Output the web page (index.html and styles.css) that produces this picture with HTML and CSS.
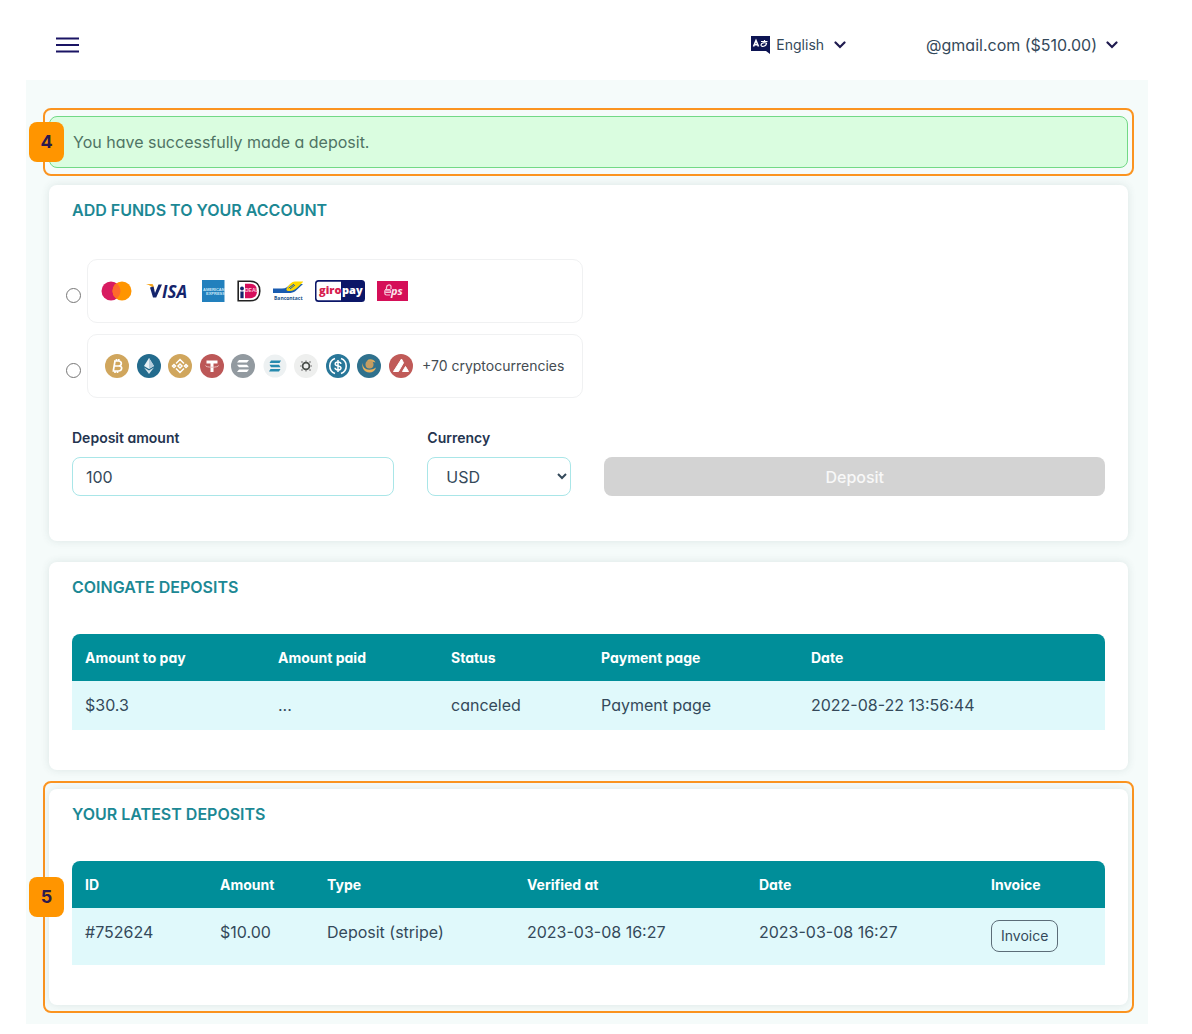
FILE: index.html
```html
<!DOCTYPE html>
<html lang="en">
<head>
<meta charset="utf-8">
<meta name="viewport" content="width=device-width, initial-scale=1">
<title>Add funds</title>
<link rel="stylesheet" href="styles.css">
</head>
<body>
<div class="page">
  <header class="topbar">
    <button class="icon-button" type="button" aria-label="Open menu">
      <svg width="23" height="16" viewBox="0 0 23 16"><path d="M0 1.5h23M0 8h23M0 14.5h23" stroke="#1a1464" stroke-width="2"/></svg>
    </button>
    <div class="topbar-menus">
      <button class="menu-button language" type="button">
        <svg width="19" height="18" viewBox="0 0 19 18"><path d="M0 0h19v18l-4-3H0z" fill="#0d1452"/><path d="M2.500 10.500 5 4.500l2.500 6M3.300 8.800h3.400" fill="none" stroke="#fff" stroke-width="1.600"/><path d="M10 5.500h6.500M13.500 4v1.500M16 7.500c-2-1.500-6-.5-6 1.500 0 2.500 5.500 1.500 5.500-2" fill="none" stroke="#fff" stroke-width="1.200"/></svg>
        <span>English</span>
        <svg class="chevron" width="12" height="8" viewBox="0 0 12 8"><path d="M1.500 1.500 6 6l4.500-4.500" fill="none" stroke="#1f1a4f" stroke-width="2.200" stroke-linecap="round"/></svg>
      </button>
      <button class="menu-button account" type="button">
        <span>@gmail.com ($510.00)</span>
        <svg class="chevron" width="12" height="8" viewBox="0 0 12 8"><path d="M1.500 1.500 6 6l4.500-4.500" fill="none" stroke="#1f1a4f" stroke-width="2.200" stroke-linecap="round"/></svg>
      </button>
    </div>
  </header>

  <main class="content">
    <div class="step">
      <span class="step-badge">4</span>
      <div class="alert" role="status">You have successfully made a deposit.</div>
    </div>

    <section class="card funds">
      <h2 class="card-title">ADD FUNDS TO YOUR ACCOUNT</h2>
      <form>
        <div class="methods">
          <div class="method">
            <input class="method-radio" type="radio" name="method" id="method-card">
            <label class="method-box method-cards" for="method-card" aria-label="Card or bank payment">
              <svg width="32" height="22" viewBox="0 0 32 22"><circle cx="10" cy="11" r="9.500" fill="#d81b60"/><circle cx="21" cy="11" r="9.500" fill="#ff9500"/><path d="M15.500 3.300a9.500 9.500 0 0 1 0 15.400 9.500 9.500 0 0 1 0-15.400z" fill="#ff6a2b"/></svg>
              <svg width="45" height="22" viewBox="0 0 45 22"><path d="M1 4h5.500c1 0 1.500.4 1.800 1.300l1.200 5C8 7.500 5 5 1 4z" fill="#f7a823"/><path d="M5 7.500 8 17.500h3.200L17 4.500h-3.500L10 13 8.500 6.500z" fill="#14246c"/><text x="17" y="17.500" class="logo-visa">ISA</text></svg>
              <svg width="23" height="22" viewBox="0 0 23 22"><path d="M0 0h22.500v22H0z" fill="#2280bd"/><text x="1" y="11" class="logo-amex">AMERICAN</text><text x="4" y="15" class="logo-amex">EXPRESS</text></svg>
              <svg width="24" height="22" viewBox="0 0 24 22"><path d="M1.200 1.200H13c6.500 0 9.800 4 9.800 9.800s-3.300 9.800-9.800 9.800H1.200z" fill="#fff" stroke="#222" stroke-width="1.600"/><path d="M8 3.800h5c5 0 7 3 7 7.200s-2 7.200-7 7.200H8z" fill="#d50f5b"/><circle cx="5" cy="8.500" r="1.900" fill="#14246c"/><path d="M3.400 11.500h3.200v6.700H3.400z" fill="#14246c"/><text x="8" y="11.500" class="logo-ideal">DEAL</text></svg>
              <svg width="30" height="22" viewBox="0 0 30 22"><path d="M0 13V8.500h9c4 0 6-1.800 8.500-4.500H30L22.500 11c-2 1.500-4 2-7 2z" fill="#1a5cb0"/><path d="M14 8c2.500-3.500 4.500-6.500 8-6.500h8.500L25 7c-3 2.500-5 4-8.500 4C14 11 12.500 10 14 8z" fill="#ffd800"/><path d="m15.500 8.200 5.500-4M17 9l5-4" stroke="#1a5cb0" stroke-width="1"/><text x="1" y="20" class="logo-bancontact">Bancontact</text></svg>
              <svg width="50" height="22" viewBox="0 0 50 22"><rect width="50" height="22" rx="3.500" fill="#0b1668"/><path d="M3.500 1.800H26v18.400H3.500a2 2 0 0 1-2-2V3.800a2 2 0 0 1 2-2z" fill="#fff"/><text x="4" y="14" class="logo-giro">giro</text><text x="27" y="14" class="logo-pay">pay</text></svg>
              <svg width="31" height="22" viewBox="0 0 31 22"><path d="M0 1h31v20H0z" fill="#d50f58"/><path d="M9.500 10V7.500a2.500 2.500 0 0 1 4.500-1.500V9M8 9.500h5.500M13 15H9.500A1.800 1.800 0 0 1 7.800 13.200v-2.400h5.700v1.700H8.500" fill="none" stroke="#f7c4d6" stroke-width="1.200"/><text x="14" y="15" class="logo-eps">ps</text></svg>
            </label>
          </div>
          <div class="method">
            <input class="method-radio" type="radio" name="method" id="method-crypto">
            <label class="method-box method-crypto" for="method-crypto">
              <span class="coins">
                <svg class="coin" viewBox="0 0 24 24"><circle cx="12" cy="12" r="12" fill="#d0a65d"/><path d="M9 7h4.500c4 0 3.500 5 0 5H9.500M9.500 12H14c4 0 3.300 5-.7 5H7.500M10 7 8.300 17M11.500 5v2M13.800 5v2M10 17v2M12.500 17v2" fill="none" stroke="#fff" stroke-width="1.700"/></svg>
                <svg class="coin" viewBox="0 0 24 24"><circle cx="12" cy="12" r="12" fill="#236b8d"/><path d="m12 4 5 8-5 3-5-3z" fill="#e8f1f5"/><path d="m12 4 5 8-5 3z" fill="#b4cddc"/><path d="m7 13.500 5 3 5-3-5 6.500z" fill="#d4e3ea"/></svg>
                <svg class="coin" viewBox="0 0 24 24"><circle cx="12" cy="12" r="12" fill="#d0a65d"/><path d="m8 9.500 4-4 4 4M8 14.500l4 4 4-4M12 10l2 2-2 2-2-2zM6 10.500 7.500 12 6 13.500 4.500 12zM18 10.500l1.500 1.500-1.500 1.500-1.500-1.500z" fill="none" stroke="#fff" stroke-width="1.500"/></svg>
                <svg class="coin" viewBox="0 0 24 24"><circle cx="12" cy="12" r="12" fill="#bc5757"/><path d="M6.500 6.500h11v3h-4V18h-3V9.500h-4z" fill="#fff"/><path d="M5.500 11.500c0 2.300 13 2.300 13 0" fill="none" stroke="#e8bdbd"/></svg>
                <svg class="coin" viewBox="0 0 24 24"><circle cx="12" cy="12" r="12" fill="#929aa0"/><path d="M8 6h10l-2 2.500H6zM6 10.700h10l2 2.500H8zM8 15.500h10L16 18H6z" fill="#fff"/></svg>
                <svg class="coin" viewBox="0 0 24 24"><circle cx="12" cy="12" r="11.500" fill="#edf1f2"/><path d="M8 6.500h10L16.500 9H6.500zM6.500 10.700h9.500l1.500 2.500H8zM7.500 15H17.500L16 17.500H6z" fill="#268aae"/></svg>
                <svg class="coin" viewBox="0 0 24 24"><circle cx="12" cy="12" r="12" fill="#eeefee"/><circle cx="12" cy="12" r="3.400" fill="none" stroke="#484d49" stroke-width="1.800"/><path d="M7 8h2M15 8h2M7 16h2M15 16h2M6 12h1.500M16.500 12H18M12 6.500V8M12 16v1.500" stroke="#777" stroke-width="1.200"/></svg>
                <svg class="coin" viewBox="0 0 24 24"><circle cx="12" cy="12" r="12" fill="#297799"/><path d="M9 4.500a8 8 0 0 0 0 15M15 4.500a8 8 0 0 1 0 15" fill="none" stroke="#fff" stroke-width="1.600"/><path d="M15 9.800c-.4-2.600-5.800-2.400-5.800.1 0 2.700 5.800 1.300 5.800 4.100 0 2.700-5.800 2.600-6-.2M12 6v12" fill="none" stroke="#fff" stroke-width="1.500"/></svg>
                <svg class="coin" viewBox="0 0 24 24"><circle cx="12" cy="12" r="12" fill="#2f718d"/><path d="M6 9c-1 6 6 9 13 4.500C17.500 20 8.500 20 6 14.500 5 12 5.300 10.500 6 9z" fill="#e6b05c"/><path d="M10 6.500c2.500-2 7-1.500 8.500 2-3-.8-5.500-.2-8.500-2z" fill="#d9a95f"/><circle cx="12.500" cy="10.500" r="4" fill="#c49d62"/></svg>
                <svg class="coin" viewBox="0 0 24 24"><circle cx="12" cy="12" r="12" fill="#c05a58"/><path d="m12.500 5 2 3.800L9.500 17.500h-5zM16.500 12.500l3 5h-6z" fill="#fff" stroke="#fff" stroke-linejoin="round"/></svg>
              </span>
              <span class="coins-more">+70 cryptocurrencies</span>
            </label>
          </div>
        </div>
        <div class="deposit-fields">
          <div class="field">
            <label class="field-label" for="amount">Deposit amount</label>
            <input class="control" id="amount" type="text" inputmode="decimal" value="100">
          </div>
          <div class="field">
            <label class="field-label" for="currency">Currency</label>
            <select class="control" id="currency"><option>USD</option><option>EUR</option></select>
          </div>
          <button class="submit" type="submit" disabled>Deposit</button>
        </div>
      </form>
    </section>

    <section class="card">
      <h2 class="card-title">COINGATE DEPOSITS</h2>
      <table class="data-table coingate">
        <thead>
          <tr><th>Amount to pay</th><th>Amount paid</th><th>Status</th><th>Payment page</th><th>Date</th></tr>
        </thead>
        <tbody>
          <tr><td>$30.3</td><td>...</td><td>canceled</td><td><a class="plain-link" href="#payment">Payment page</a></td><td>2022-08-22 13:56:44</td></tr>
        </tbody>
      </table>
    </section>

    <div class="step">
      <span class="step-badge">5</span>
      <section class="card">
        <h2 class="card-title">YOUR LATEST DEPOSITS</h2>
        <table class="data-table latest">
          <thead>
            <tr><th>ID</th><th>Amount</th><th>Type</th><th>Verified at</th><th>Date</th><th>Invoice</th></tr>
          </thead>
          <tbody>
            <tr><td>#752624</td><td>$10.00</td><td>Deposit (stripe)</td><td>2023-03-08 16:27</td><td>2023-03-08 16:27</td><td><button class="invoice" type="button">Invoice</button></td></tr>
          </tbody>
        </table>
      </section>
    </div>
  </main>
</div>
</body>
</html>
```
FILE: styles.css
```css
* { box-sizing: border-box; }

body {
  margin: 0;
  background: #fff;
  color: #34495a;
  font-family: Inter, "Liberation Sans", sans-serif;
  font-size: 16px;
  line-height: 24px;
  font-feature-settings: "cv11";
}

button, input, select { font: inherit; font-feature-settings: inherit; color: inherit; }
svg { display: block; flex: none; }

.page { padding: 0 44px 10px 26px; }

/* Top bar */
.topbar {
  display: flex;
  align-items: center;
  justify-content: space-between;
  height: 80px;
  padding: 10px 30px 0;
}
.icon-button, .menu-button { padding: 0; border: 0; background: none; cursor: pointer; }
.topbar-menus { display: flex; gap: 80px; }
.menu-button { display: flex; align-items: center; }
.language { font-size: 14px; gap: 6px; }
.language .chevron { margin-left: 4px; }
.account { font-size: 16px; gap: 9px; }

/* Content column */
.content { padding: 28px 14px 11px 17px; background: #f5fbfa; }

.step {
  position: relative;
  padding: 6px 4px;
  border: 2px solid #fb9420;
  border-radius: 8px;
}
.step-badge {
  position: absolute;
  left: -16px;
  top: 50%;
  transform: translateY(-50%);
  width: 35px;
  height: 40px;
  border-radius: 8px;
  background: #ff9500;
  color: #2b1a4d;
  font-size: 18px;
  font-weight: 700;
  line-height: 40px;
  text-align: center;
}

.alert {
  padding: 13px 23px;
  border: 1px solid #72d986;
  border-radius: 8px;
  background: #dafde0;
  color: #4f7464;
}

.card {
  padding: 13px 23px 40px;
  border-radius: 8px;
  background: #fff;
  box-shadow: 0 0 8px rgba(40, 70, 70, 0.12);
}
.content > .card { margin: 21px 6px 11px; }
.content > .funds { margin: 9px 6px 0; padding-bottom: 45px; }

.card-title {
  margin: 0 0 35px;
  color: #1c8894;
  font-size: 16px;
  font-weight: 600;
  line-height: 24px;
}

/* Payment methods */
.methods { display: grid; gap: 11px; max-width: 511px; margin-bottom: 28px; padding-top: 2px; }
.method { display: flex; align-items: center; gap: 6px; }
.method-radio { flex: none; width: 15px; height: 15px; margin: 8px 0 0 -6px; }
.method-box {
  display: flex;
  flex: 1;
  align-items: center;
  gap: 12px;
  height: 64px;
  padding: 0 13px;
  border: 1px solid #f0f1f2;
  border-radius: 10px;
}
.method-crypto { gap: 9px; padding: 0 17px; }
.coins { display: flex; justify-content: space-between; width: 308px; }
.coin { width: 24px; height: 24px; }
.coins-more { color: #444c52; font-size: 14px; white-space: nowrap; }

.logo-visa { fill: #14246c; font: italic 700 17px "Open Sans", sans-serif; }
.logo-amex { fill: #c9e6f7; font: 700 4px "Liberation Sans", sans-serif; }
.logo-ideal { fill: #f8c8d9; font: 700 5px "Liberation Sans", sans-serif; }
.logo-bancontact { fill: #164f87; font: 700 5px "Open Sans", sans-serif; }
.logo-giro { fill: #d6204e; font: 800 11px "Open Sans", sans-serif; }
.logo-pay { fill: #fff; font: 800 11px "Open Sans", sans-serif; }
.logo-eps { fill: #fbe3ec; font: italic 700 11px "Open Sans", sans-serif; }

/* Deposit form */
.deposit-fields {
  display: grid;
  grid-template-columns: 322fr 144fr 500fr;
  gap: 33px;
  align-items: end;
}
.field { display: grid; gap: 7px; }
.field-label { color: #24344f; font-size: 14px; font-weight: 600; }
.control {
  width: 100%;
  height: 39px;
  padding: 0 13px;
  border: 1px solid #a9e6e8;
  border-radius: 8px;
  background: #fff;
}
select.control { padding: 0 4px 0 14px; }
.submit {
  height: 39px;
  border: 0;
  border-radius: 8px;
  background: #d3d3d3;
  color: #f8f8f8;
  font-weight: 500;
}

/* Tables */
.data-table { width: 100%; border-spacing: 0; table-layout: fixed; text-align: left; }
.data-table th {
  height: 47px;
  padding: 0 0 0 13px;
  background: #008e99;
  color: #fff;
  font-size: 14px;
  font-weight: 700;
}
.data-table th:first-child { border-top-left-radius: 8px; }
.data-table th:last-child { border-top-right-radius: 8px; }
.data-table td { padding: 12px 0 13px 13px; background: #e0f9fb; vertical-align: top; }

.coingate th:nth-child(1) { width: 193px; }
.coingate th:nth-child(2) { width: 173px; }
.coingate th:nth-child(3) { width: 150px; }
.coingate th:nth-child(4) { width: 210px; }

.latest th:nth-child(1) { width: 135px; }
.latest th:nth-child(2) { width: 107px; }
.latest th:nth-child(3) { width: 200px; }
.latest th:nth-child(4), .latest th:nth-child(5) { width: 232px; }

.plain-link { color: inherit; text-decoration: none; }
.invoice {
  display: block;
  height: 32px;
  padding: 0 9px;
  border: 1px solid #5c6d78;
  border-radius: 8px;
  background: none;
  font-size: 14px;
}
```
